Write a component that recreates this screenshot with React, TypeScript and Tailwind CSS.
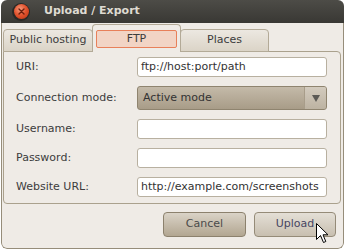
const rows = [
  { label: "URI:", value: "ftp://host:port/path" },
  { label: "Connection mode:", value: "Active mode", combo: true },
  { label: "Username:", value: "" },
  { label: "Password:", value: "" },
  { label: "Website URL:", value: "http://example.com/screenshots" },
]

function CloseButton() {
  return (
    <div className="ml-[11px] flex h-[18px] w-[18px] items-center justify-center rounded-full bg-[#2a2926]">
      <div className="flex h-[15px] w-[15px] items-center justify-center rounded-full bg-[radial-gradient(circle_at_40%_35%,#f59a7c_0%,#e2542f_45%,#b8310f_100%)]">
        <svg width="7" height="7" viewBox="0 0 7 7">
          <path d="M1 1 L6 6 M6 1 L1 6" stroke="#6b1e0c" strokeWidth="1.4" strokeLinecap="round" />
        </svg>
      </div>
    </div>
  )
}

export default function App() {
  return (
    <div className="relative h-[250px] w-[345px] bg-white font-['DejaVu_Sans',sans-serif] text-[11px] text-[#3c3c3c]">
      <div className="ml-[1px] flex h-[249px] w-[343px] flex-col overflow-hidden rounded-[6px]">
        <div className="flex h-[23px] items-center bg-gradient-to-b from-[#4d4c47] to-[#393834]">
          <CloseButton />
          <span className="ml-[14px] text-[11px] font-bold text-[#dfdbd2]">Upload / Export</span>
        </div>

        <div className="flex flex-1 flex-col rounded-b-[6px] border-x border-b border-[#968d7a] bg-[#efebe6]">
          <div className="relative z-10 -mb-px flex h-[29px] items-end pl-px">
            <div className="flex h-[23px] w-[90px] items-center justify-center rounded-t-[4px] border border-[#b3aa97] bg-gradient-to-b from-[#ece8e1] to-[#dbd4c7]">
              Public hosting
            </div>
            <div className="-ml-px flex h-[28px] w-[89px] flex-col items-stretch rounded-t-[4px] border border-b-0 border-[#b3aa97] bg-[#efebe6] px-[3px] pt-[5px]">
              <div className="flex h-[18px] items-center justify-center rounded-[2px] border border-[#e8805a] bg-[#f2d4c5]">
                FTP
              </div>
            </div>
            <div className="-ml-px flex h-[23px] w-[89px] items-center justify-center rounded-t-[4px] border border-[#b3aa97] bg-gradient-to-b from-[#ece8e1] to-[#dbd4c7]">
              Places
            </div>
          </div>

          <div className="mx-px w-[338px] rounded-[4px] rounded-tl-none border border-[#aaa18d] pb-[6px] pl-[12px] pt-[5px]">
            <div className="grid grid-cols-[121px_190px] gap-y-[9px]">
              {rows.map((r) => (
                <div key={r.label} className="contents">
                  <div className="flex items-center">{r.label}</div>
                  {r.combo ? (
                    <div className="flex h-[24px] items-stretch overflow-hidden rounded-[3px] border border-[#8f846f] bg-gradient-to-b from-[#c4baa9] to-[#a89c88]">
                      <div className="flex flex-1 items-center pl-[5px] text-[#333]">{r.value}</div>
                      <div className="flex w-[22px] items-center justify-center border-l border-[#a89d8a] bg-gradient-to-b from-[#d3cbbe] to-[#bdb3a2]">
                        <svg width="8" height="7" viewBox="0 0 8 7">
                          <path d="M0 0 H8 L4 7 Z" fill="#5c5a55" />
                        </svg>
                      </div>
                    </div>
                  ) : (
                    <div className="flex h-[20px] items-center rounded-[3px] border border-[#b8b0a0] bg-white pl-[3px] text-[#333]">
                      {r.value}
                    </div>
                  )}
                </div>
              ))}
            </div>
          </div>

          <div className="mt-[8px] flex justify-end gap-[8px] pr-[7px]">
            <button className="flex h-[25px] w-[83px] items-center justify-center rounded-[4px] border border-[#8c816d] bg-gradient-to-b from-[#dad3c7] to-[#b2a691] text-[#4a4a4a]">
              Cancel
            </button>
            <button className="flex h-[25px] w-[82px] items-center justify-center rounded-[4px] border border-[#958b78] bg-gradient-to-b from-[#e4dfd6] to-[#c8bfb0] text-[#474562]">
              Upload
            </button>
          </div>
        </div>
      </div>

      <svg className="absolute left-[316px] top-[223px]" width="13" height="21" viewBox="0 0 13 21">
        <path d="M0.5 0.5 L0.5 16.5 L4.5 12.5 L7.5 19.5 L9.8 18.5 L7 11.8 L12 11.8 Z" fill="white" stroke="black" strokeWidth="1" strokeLinejoin="round" />
      </svg>
    </div>
  )
}
